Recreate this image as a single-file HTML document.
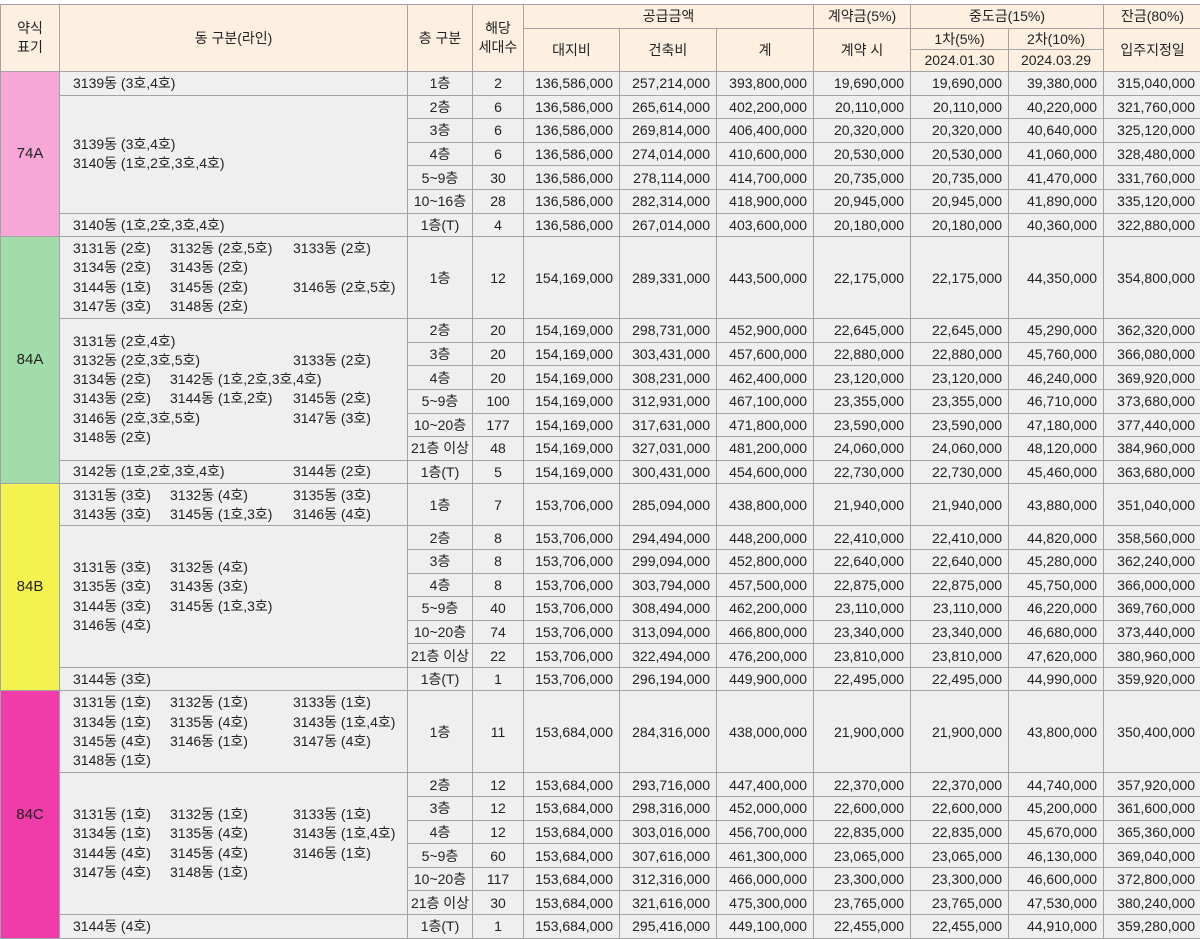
<!DOCTYPE html>
<html><head><meta charset="utf-8">
<style>
html,body{margin:0;padding:0;background:#fff;width:1200px;height:939px;overflow:hidden}
body{font-family:"Liberation Sans","Noto Sans CJK KR",sans-serif;font-size:14px;color:#222}
table{position:absolute;left:0;top:4px;border-collapse:collapse;table-layout:fixed;width:1201px}
td{border:1px solid #a3a3a3;padding:0;height:22.6px;background:#efefef;text-align:right;padding-right:6px;white-space:nowrap;overflow:hidden;line-height:18px}
thead td{background:#fdf0e1;text-align:center;padding:0;line-height:19px;height:auto}
td.c{text-align:center;padding:0}
td.g{text-align:left;padding:0 0 0 13px;vertical-align:middle}
td.k{text-align:center;padding:0;font-size:15px}
.L{position:relative;height:19.3px;line-height:19.3px}
.L span{position:absolute;top:0}
.L .a{left:0}.L .b{left:97px}.L .d{left:220px}
</style></head><body>
<table>
<colgroup><col style="width:59px"><col style="width:348px"><col style="width:65px"><col style="width:51px"><col style="width:96px"><col style="width:97px"><col style="width:97px"><col style="width:97px"><col style="width:98px"><col style="width:95px"><col style="width:98px"></colgroup>
<thead>
<tr style="height:24px"><td rowspan="3">약식<br>표기</td><td rowspan="3">동 구분(라인)</td><td rowspan="3">층 구분</td><td rowspan="3">해당<br>세대수</td><td colspan="3">공급금액</td><td>계약금(5%)</td><td colspan="2">중도금(15%)</td><td>잔금(80%)</td></tr>
<tr style="height:21px"><td rowspan="2">대지비</td><td rowspan="2">건축비</td><td rowspan="2">계</td><td rowspan="2">계약 시</td><td>1차(5%)</td><td>2차(10%)</td><td rowspan="2">입주지정일</td></tr>
<tr style="height:22px"><td>2024.01.30</td><td>2024.03.29</td></tr>
</thead>
<tbody>
<tr><td class="k" rowspan="7" style="background:#f6a7d7">74A</td><td class="g">3139동 (3호,4호)</td><td class="c">1층</td><td class="c">2</td><td>136,586,000</td><td>257,214,000</td><td>393,800,000</td><td>19,690,000</td><td>19,690,000</td><td>39,380,000</td><td>315,040,000</td></tr>
<tr><td class="g" rowspan="5"><div class="L"><span class="a">3139동 (3호,4호)</span></div><div class="L"><span class="a">3140동 (1호,2호,3호,4호)</span></div></td><td class="c">2층</td><td class="c">6</td><td>136,586,000</td><td>265,614,000</td><td>402,200,000</td><td>20,110,000</td><td>20,110,000</td><td>40,220,000</td><td>321,760,000</td></tr>
<tr><td class="c">3층</td><td class="c">6</td><td>136,586,000</td><td>269,814,000</td><td>406,400,000</td><td>20,320,000</td><td>20,320,000</td><td>40,640,000</td><td>325,120,000</td></tr>
<tr><td class="c">4층</td><td class="c">6</td><td>136,586,000</td><td>274,014,000</td><td>410,600,000</td><td>20,530,000</td><td>20,530,000</td><td>41,060,000</td><td>328,480,000</td></tr>
<tr><td class="c">5~9층</td><td class="c">30</td><td>136,586,000</td><td>278,114,000</td><td>414,700,000</td><td>20,735,000</td><td>20,735,000</td><td>41,470,000</td><td>331,760,000</td></tr>
<tr><td class="c">10~16층</td><td class="c">28</td><td>136,586,000</td><td>282,314,000</td><td>418,900,000</td><td>20,945,000</td><td>20,945,000</td><td>41,890,000</td><td>335,120,000</td></tr>
<tr><td class="g">3140동 (1호,2호,3호,4호)</td><td class="c">1층(T)</td><td class="c">4</td><td>136,586,000</td><td>267,014,000</td><td>403,600,000</td><td>20,180,000</td><td>20,180,000</td><td>40,360,000</td><td>322,880,000</td></tr>

<tr style="height:82px"><td class="k" rowspan="8" style="background:#a3dcab">84A</td><td class="g"><div class="L"><span class="a">3131동 (2호)</span><span class="b">3132동 (2호,5호)</span><span class="d">3133동 (2호)</span></div><div class="L"><span class="a">3134동 (2호)</span><span class="b">3143동 (2호)</span></div><div class="L"><span class="a">3144동 (1호)</span><span class="b">3145동 (2호)</span><span class="d">3146동 (2호,5호)</span></div><div class="L"><span class="a">3147동 (3호)</span><span class="b">3148동 (2호)</span></div></td><td class="c">1층</td><td class="c">12</td><td>154,169,000</td><td>289,331,000</td><td>443,500,000</td><td>22,175,000</td><td>22,175,000</td><td>44,350,000</td><td>354,800,000</td></tr>
<tr><td class="g" rowspan="6"><div class="L"><span class="a">3131동 (2호,4호)</span></div><div class="L"><span class="a">3132동 (2호,3호,5호)</span><span class="d">3133동 (2호)</span></div><div class="L"><span class="a">3134동 (2호)</span><span class="b">3142동 (1호,2호,3호,4호)</span></div><div class="L"><span class="a">3143동 (2호)</span><span class="b">3144동 (1호,2호)</span><span class="d">3145동 (2호)</span></div><div class="L"><span class="a">3146동 (2호,3호,5호)</span><span class="d">3147동 (3호)</span></div><div class="L"><span class="a">3148동 (2호)</span></div></td><td class="c">2층</td><td class="c">20</td><td>154,169,000</td><td>298,731,000</td><td>452,900,000</td><td>22,645,000</td><td>22,645,000</td><td>45,290,000</td><td>362,320,000</td></tr>
<tr><td class="c">3층</td><td class="c">20</td><td>154,169,000</td><td>303,431,000</td><td>457,600,000</td><td>22,880,000</td><td>22,880,000</td><td>45,760,000</td><td>366,080,000</td></tr>
<tr><td class="c">4층</td><td class="c">20</td><td>154,169,000</td><td>308,231,000</td><td>462,400,000</td><td>23,120,000</td><td>23,120,000</td><td>46,240,000</td><td>369,920,000</td></tr>
<tr><td class="c">5~9층</td><td class="c">100</td><td>154,169,000</td><td>312,931,000</td><td>467,100,000</td><td>23,355,000</td><td>23,355,000</td><td>46,710,000</td><td>373,680,000</td></tr>
<tr><td class="c">10~20층</td><td class="c">177</td><td>154,169,000</td><td>317,631,000</td><td>471,800,000</td><td>23,590,000</td><td>23,590,000</td><td>47,180,000</td><td>377,440,000</td></tr>
<tr><td class="c">21층 이상</td><td class="c">48</td><td>154,169,000</td><td>327,031,000</td><td>481,200,000</td><td>24,060,000</td><td>24,060,000</td><td>48,120,000</td><td>384,960,000</td></tr>
<tr><td class="g"><div class="L"><span class="a">3142동 (1호,2호,3호,4호)</span><span class="d">3144동 (2호)</span></div></td><td class="c">1층(T)</td><td class="c">5</td><td>154,169,000</td><td>300,431,000</td><td>454,600,000</td><td>22,730,000</td><td>22,730,000</td><td>45,460,000</td><td>363,680,000</td></tr>

<tr style="height:42px"><td class="k" rowspan="8" style="background:#f4f24f">84B</td><td class="g"><div class="L"><span class="a">3131동 (3호)</span><span class="b">3132동 (4호)</span><span class="d">3135동 (3호)</span></div><div class="L"><span class="a">3143동 (3호)</span><span class="b">3145동 (1호,3호)</span><span class="d">3146동 (4호)</span></div></td><td class="c">1층</td><td class="c">7</td><td>153,706,000</td><td>285,094,000</td><td>438,800,000</td><td>21,940,000</td><td>21,940,000</td><td>43,880,000</td><td>351,040,000</td></tr>
<tr><td class="g" rowspan="6"><div class="L"><span class="a">3131동 (3호)</span><span class="b">3132동 (4호)</span></div><div class="L"><span class="a">3135동 (3호)</span><span class="b">3143동 (3호)</span></div><div class="L"><span class="a">3144동 (3호)</span><span class="b">3145동 (1호,3호)</span></div><div class="L"><span class="a">3146동 (4호)</span></div></td><td class="c">2층</td><td class="c">8</td><td>153,706,000</td><td>294,494,000</td><td>448,200,000</td><td>22,410,000</td><td>22,410,000</td><td>44,820,000</td><td>358,560,000</td></tr>
<tr><td class="c">3층</td><td class="c">8</td><td>153,706,000</td><td>299,094,000</td><td>452,800,000</td><td>22,640,000</td><td>22,640,000</td><td>45,280,000</td><td>362,240,000</td></tr>
<tr><td class="c">4층</td><td class="c">8</td><td>153,706,000</td><td>303,794,000</td><td>457,500,000</td><td>22,875,000</td><td>22,875,000</td><td>45,750,000</td><td>366,000,000</td></tr>
<tr><td class="c">5~9층</td><td class="c">40</td><td>153,706,000</td><td>308,494,000</td><td>462,200,000</td><td>23,110,000</td><td>23,110,000</td><td>46,220,000</td><td>369,760,000</td></tr>
<tr><td class="c">10~20층</td><td class="c">74</td><td>153,706,000</td><td>313,094,000</td><td>466,800,000</td><td>23,340,000</td><td>23,340,000</td><td>46,680,000</td><td>373,440,000</td></tr>
<tr><td class="c">21층 이상</td><td class="c">22</td><td>153,706,000</td><td>322,494,000</td><td>476,200,000</td><td>23,810,000</td><td>23,810,000</td><td>47,620,000</td><td>380,960,000</td></tr>
<tr><td class="g">3144동 (3호)</td><td class="c">1층(T)</td><td class="c">1</td><td>153,706,000</td><td>296,194,000</td><td>449,900,000</td><td>22,495,000</td><td>22,495,000</td><td>44,990,000</td><td>359,920,000</td></tr>

<tr style="height:82px"><td class="k" rowspan="8" style="background:#ef3ca9">84C</td><td class="g"><div class="L"><span class="a">3131동 (1호)</span><span class="b">3132동 (1호)</span><span class="d">3133동 (1호)</span></div><div class="L"><span class="a">3134동 (1호)</span><span class="b">3135동 (4호)</span><span class="d">3143동 (1호,4호)</span></div><div class="L"><span class="a">3145동 (4호)</span><span class="b">3146동 (1호)</span><span class="d">3147동 (4호)</span></div><div class="L"><span class="a">3148동 (1호)</span></div></td><td class="c">1층</td><td class="c">11</td><td>153,684,000</td><td>284,316,000</td><td>438,000,000</td><td>21,900,000</td><td>21,900,000</td><td>43,800,000</td><td>350,400,000</td></tr>
<tr><td class="g" rowspan="6"><div class="L"><span class="a">3131동 (1호)</span><span class="b">3132동 (1호)</span><span class="d">3133동 (1호)</span></div><div class="L"><span class="a">3134동 (1호)</span><span class="b">3135동 (4호)</span><span class="d">3143동 (1호,4호)</span></div><div class="L"><span class="a">3144동 (4호)</span><span class="b">3145동 (4호)</span><span class="d">3146동 (1호)</span></div><div class="L"><span class="a">3147동 (4호)</span><span class="b">3148동 (1호)</span></div></td><td class="c">2층</td><td class="c">12</td><td>153,684,000</td><td>293,716,000</td><td>447,400,000</td><td>22,370,000</td><td>22,370,000</td><td>44,740,000</td><td>357,920,000</td></tr>
<tr><td class="c">3층</td><td class="c">12</td><td>153,684,000</td><td>298,316,000</td><td>452,000,000</td><td>22,600,000</td><td>22,600,000</td><td>45,200,000</td><td>361,600,000</td></tr>
<tr><td class="c">4층</td><td class="c">12</td><td>153,684,000</td><td>303,016,000</td><td>456,700,000</td><td>22,835,000</td><td>22,835,000</td><td>45,670,000</td><td>365,360,000</td></tr>
<tr><td class="c">5~9층</td><td class="c">60</td><td>153,684,000</td><td>307,616,000</td><td>461,300,000</td><td>23,065,000</td><td>23,065,000</td><td>46,130,000</td><td>369,040,000</td></tr>
<tr><td class="c">10~20층</td><td class="c">117</td><td>153,684,000</td><td>312,316,000</td><td>466,000,000</td><td>23,300,000</td><td>23,300,000</td><td>46,600,000</td><td>372,800,000</td></tr>
<tr><td class="c">21층 이상</td><td class="c">30</td><td>153,684,000</td><td>321,616,000</td><td>475,300,000</td><td>23,765,000</td><td>23,765,000</td><td>47,530,000</td><td>380,240,000</td></tr>
<tr><td class="g">3144동 (4호)</td><td class="c">1층(T)</td><td class="c">1</td><td>153,684,000</td><td>295,416,000</td><td>449,100,000</td><td>22,455,000</td><td>22,455,000</td><td>44,910,000</td><td>359,280,000</td></tr>
</tbody>
</table>
</body></html>
